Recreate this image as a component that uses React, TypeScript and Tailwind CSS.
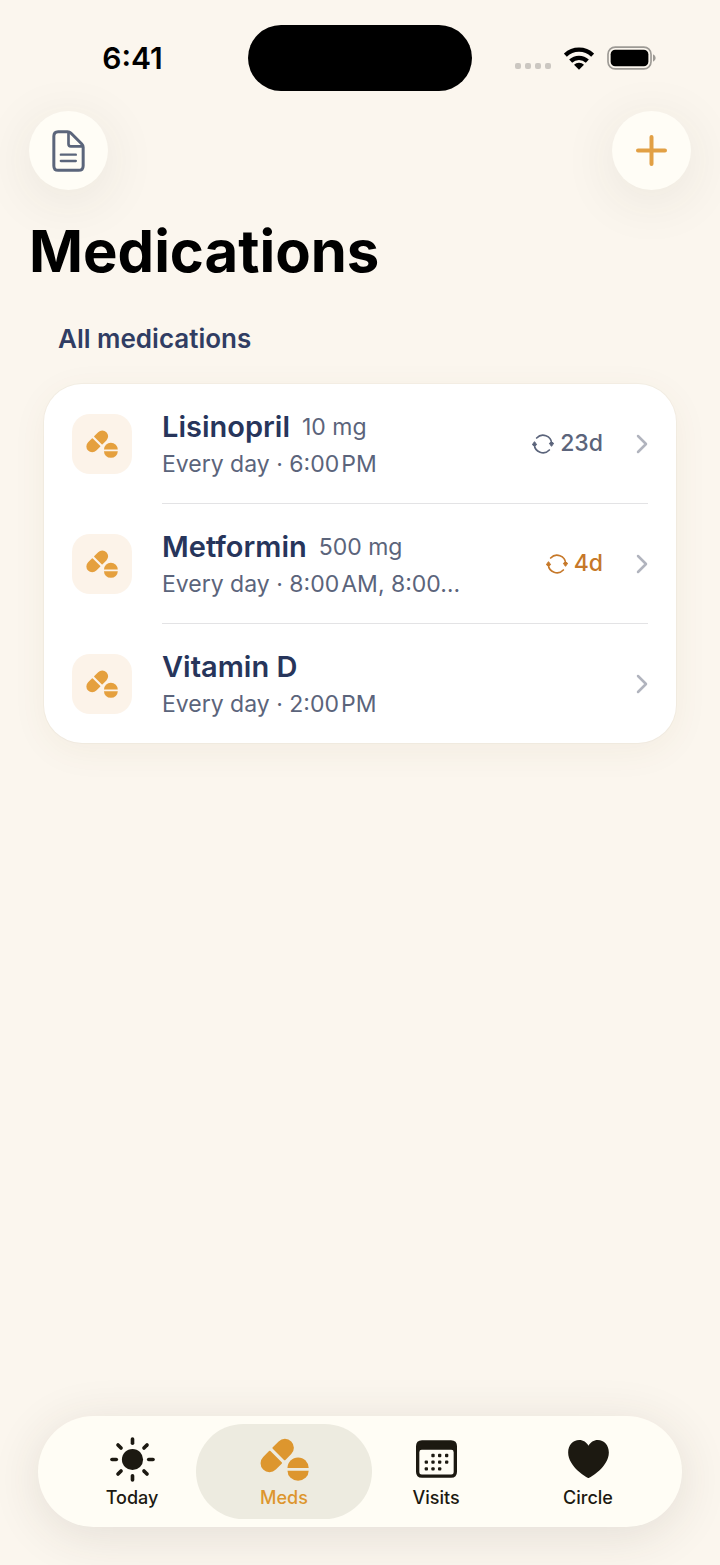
import React from 'react';
import clsx from 'clsx';

interface IconProps {
  className?: string;
}

interface Medication {
  name: string;
  dose?: string;
  schedule: string;
  refill?: string;
  refillSoon?: boolean;
}

// \u200a is a hair space, iOS keeps AM/PM tight against the time
const medications: Medication[] = [
  { name: 'Lisinopril', dose: '10 mg', schedule: 'Every day · 6:00\u200aPM', refill: '23d' },
  {
    name: 'Metformin',
    dose: '500 mg',
    schedule: 'Every day · 8:00\u200aAM, 8:00…',
    refill: '4d',
    refillSoon: true,
  },
  { name: 'Vitamin D', schedule: 'Every day · 2:00\u200aPM' },
];

const PillsIcon: React.FC<IconProps> = ({ className }) => (
  <svg viewBox="0 0 148 128" fill="currentColor" className={className} aria-hidden="true">
    <g transform="translate(52 52) rotate(-45)">
      <path d="M-5 -24 Q-5 -27 -8 -27 H-33 A27 27 0 0 0 -33 27 H-8 Q-5 27 -5 24Z" />
      <path d="M5 -24 Q5 -27 8 -27 H33 A27 27 0 0 1 33 27 H8 Q5 27 5 24Z" />
    </g>
    <path d="M83 90 A32 32 0 0 1 147 90Z" />
    <path d="M83 98 A32 30 0 0 0 147 98Z" />
  </svg>
);

const SunIcon: React.FC<IconProps> = ({ className }) => (
  <svg viewBox="0 0 136 136" className={className} aria-hidden="true">
    <circle cx="68" cy="68" r="32" fill="currentColor" />
    <g stroke="currentColor" strokeWidth="11" strokeLinecap="round">
      {[0, 45, 90, 135, 180, 225, 270, 315].map((angle) => (
        <path key={angle} d="M68 6 V19" transform={`rotate(${angle} 68 68)`} />
      ))}
    </g>
  </svg>
);

const CalendarIcon: React.FC<IconProps> = ({ className }) => (
  <svg viewBox="0 0 123 113" fill="currentColor" className={className} aria-hidden="true">
    <path
      fillRule="evenodd"
      d="M18 0H105Q123 0 123 18V95Q123 113 105 113H18Q0 113 0 95V18Q0 0 18 0ZM17 29Q10 29 10 36V96Q10 103 17 103H106Q113 103 113 96V36Q113 29 106 29Z"
    />
    {[
      [51, 46], [71, 46], [92, 46],
      [31, 66], [51, 66], [71, 66], [92, 66],
      [31, 86], [51, 86], [71, 86],
    ].map(([x, y]) => (
      <rect key={`${x}-${y}`} x={x - 5} y={y - 5} width="10" height="10" rx="3" />
    ))}
  </svg>
);

const HeartIcon: React.FC<IconProps> = ({ className }) => (
  <svg viewBox="0 0 121 113" fill="currentColor" className={className} aria-hidden="true">
    <path d="M60.5 113 C57 113 0 80 0 37 C0 15 14 0 33 0 C45 0 55 7 60.5 17 C66 7 76 0 88 0 C107 0 121 15 121 37 C121 80 64 113 60.5 113Z" />
  </svg>
);

const DocumentIcon: React.FC<IconProps> = ({ className }) => (
  <svg
    viewBox="0 0 98 126"
    fill="none"
    stroke="currentColor"
    strokeLinejoin="round"
    strokeLinecap="round"
    className={className}
    aria-hidden="true"
  >
    <path
      strokeWidth="9"
      d="M18 5H46Q52 5 56 9L89 42Q93 46 93 52V107Q93 121 79 121H18Q5 121 5 107V19Q5 5 18 5Z"
    />
    <path strokeWidth="8" d="M49 7V42Q49 49 56 49H91" />
    <path strokeWidth="7" d="M26 74H71M26 93H71" />
  </svg>
);

const PlusIcon: React.FC<IconProps> = ({ className }) => (
  <svg
    viewBox="0 0 31 31"
    stroke="currentColor"
    strokeWidth="4"
    strokeLinecap="round"
    className={className}
    aria-hidden="true"
  >
    <path d="M15.5 2V29M2 15.5H29" />
  </svg>
);

const RefillIcon: React.FC<IconProps> = ({ className }) => (
  <svg viewBox="0 0 66 60" className={className} aria-hidden="true">
    <g fill="none" stroke="currentColor" strokeWidth="5" strokeLinecap="round">
      <path d="M14 12A26 26 0 0 1 59 28" />
      <path d="M52 48A26 26 0 0 1 7 32" />
    </g>
    <path
      fill="currentColor"
      stroke="currentColor"
      strokeWidth="3"
      strokeLinejoin="round"
      d="M52 28L58.5 24L65 28L58.5 37ZM1 32L7.5 23L14 32L7.5 36Z"
    />
  </svg>
);

const ChevronIcon: React.FC<IconProps> = ({ className }) => (
  <svg
    viewBox="0 0 12 20"
    fill="none"
    stroke="currentColor"
    strokeWidth="2.5"
    strokeLinecap="round"
    strokeLinejoin="round"
    className={className}
    aria-hidden="true"
  >
    <path d="M2 2L10 10L2 18" />
  </svg>
);

const WifiIcon: React.FC<IconProps> = ({ className }) => (
  <svg viewBox="0 0 90 68" className={className} aria-hidden="true">
    <g fill="none" stroke="currentColor" strokeWidth="13">
      <path d="M4 24A59 59 0 0 1 86 24" />
      <path d="M20 42A36 36 0 0 1 70 42" />
    </g>
    <path fill="currentColor" d="M45 68L30 53A21 21 0 0 1 60 53Z" />
  </svg>
);

const BatteryIcon: React.FC<IconProps> = ({ className }) => (
  <svg viewBox="0 0 148 72" className={className} aria-hidden="true">
    <rect x="3" y="3" width="130" height="66" rx="22" fill="none" stroke="#9d9a95" strokeWidth="5" />
    <rect x="11" y="11" width="114" height="50" rx="14" fill="currentColor" />
    <path d="M139 25Q147 28 147 36Q147 44 139 47Z" fill="#9d9a95" />
  </svg>
);

const tabs = [
  { label: 'Today', Icon: SunIcon, size: 'h-[45px] w-[45px]' },
  { label: 'Meds', Icon: PillsIcon, size: 'h-[43px] w-[49px]' },
  { label: 'Visits', Icon: CalendarIcon, size: 'h-[38px] w-[41px]' },
  { label: 'Circle', Icon: HeartIcon, size: 'h-[38px] w-[41px]' },
];

const StatusBar: React.FC = () => (
  <div className="grid grid-cols-[1fr_224px_1fr] items-center pt-[25px] text-black">
    <span className="pl-[17px] text-center text-[30px] leading-9 font-semibold">6:41</span>
    <div className="h-[66px] rounded-full bg-black" />
    <div className="flex items-center justify-center pr-[21px]">
      <div className="mt-4 mr-[13px] flex gap-1">
        {[0, 1, 2, 3].map((dot) => (
          <span key={dot} className="size-[6px] rounded-xs bg-[#cbc7c1]" />
        ))}
      </div>
      <WifiIcon className="mr-[13px] h-[23px] w-[30px]" />
      <BatteryIcon className="h-6 w-[49px]" />
    </div>
  </div>
);

const MedicationRow: React.FC<{ medication: Medication; last: boolean }> = ({
  medication,
  last,
}) => {
  const { name, dose, schedule, refill, refillSoon } = medication;

  return (
    <li>
      <button type="button" className="flex w-full items-center pl-7 text-left">
        <span className="flex size-[60px] shrink-0 items-center justify-center rounded-[18px] bg-[#fcf3e9] text-[#e5a03e]">
          <PillsIcon className="h-7 w-8" />
        </span>
        <span
          className={clsx(
            'mr-7 ml-[30px] flex min-w-0 flex-1 items-center border-[#e3e3e5]',
            last ? 'h-[119px]' : 'h-[120px] border-b'
          )}
        >
          <span className="min-w-0 pt-px">
            <span className="flex items-center gap-3">
              <span className="text-[29px] leading-10 font-semibold text-[#27355b]">{name}</span>
              {dose && <span className="text-[23px] leading-10 text-[#5b647b]">{dose}</span>}
            </span>
            <span className="block truncate text-[23px] leading-[34px] text-[#5b647b]">
              {schedule}
            </span>
          </span>
          {refill && (
            <span
              className={clsx(
                'ml-auto flex items-center gap-1.5 text-[23px] font-medium',
                refillSoon ? 'text-[#c67829]' : 'text-[#5b647b]'
              )}
            >
              <RefillIcon className="h-5 w-[22px]" />
              {refill}
            </span>
          )}
          <ChevronIcon
            className={clsx('h-5 w-3 shrink-0 text-[#b1b4be]', refill ? 'ml-[33px]' : 'ml-auto')}
          />
        </span>
      </button>
    </li>
  );
};

const App: React.FC = () => {
  const [activeTab, setActiveTab] = React.useState('Meds');

  return (
    <div className="flex min-h-screen flex-col bg-[#fbf6ee] font-[Inter,'Liberation_Sans',sans-serif]">
      <StatusBar />

      <header className="px-[29px] pt-5">
        <div className="flex justify-between">
          <button
            type="button"
            aria-label="Medication report"
            className="flex size-[79px] items-center justify-center rounded-full bg-[#fffdf6] text-[#5b657b] shadow-[0_10px_56px_rgba(60,50,40,0.09)]"
          >
            <DocumentIcon className="h-[42px] w-[33px]" />
          </button>
          <button
            type="button"
            aria-label="Add medication"
            className="flex size-[79px] items-center justify-center rounded-full bg-[#fffdf6] text-[#e2a044] shadow-[0_10px_56px_rgba(60,50,40,0.09)]"
          >
            <PlusIcon className="size-[31px]" />
          </button>
        </div>
        <h1 className="mt-[25px] text-[58px] leading-[72px] font-bold text-black">Medications</h1>
      </header>

      <main className="flex-1 px-11 pt-[34px]">
        <h2 className="pl-[14px] text-[26px] leading-9 font-semibold text-[#303d63]">
          All medications
        </h2>
        <ul className="mt-[27px] rounded-[38px] bg-white shadow-[0_0_0_1px_rgba(60,50,40,0.03),0_8px_36px_rgba(120,90,40,0.06)]">
          {medications.map((medication, index) => (
            <MedicationRow
              key={medication.name}
              medication={medication}
              last={index === medications.length - 1}
            />
          ))}
        </ul>
      </main>

      <nav className="mx-[38px] mb-[38px] grid grid-cols-4 rounded-full bg-[#fffdf5] px-[18px] py-2 shadow-[0_8px_50px_rgba(60,50,40,0.12)]">
        {tabs.map(({ label, Icon, size }) => {
          const active = label === activeTab;
          return (
            <button
              key={label}
              type="button"
              aria-current={active ? 'page' : undefined}
              onClick={() => setActiveTab(label)}
              className={clsx(
                '-mx-3 flex h-[95px] flex-col items-center rounded-full pt-3 text-[18px] leading-6 font-medium',
                active ? 'bg-[#edebe0] text-[#dd962e]' : 'text-[#1c1911]'
              )}
            >
              <span className="flex h-[46px] items-center">
                <Icon className={size} />
              </span>
              <span className="mt-1">{label}</span>
            </button>
          );
        })}
      </nav>
    </div>
  );
};

export default App;
